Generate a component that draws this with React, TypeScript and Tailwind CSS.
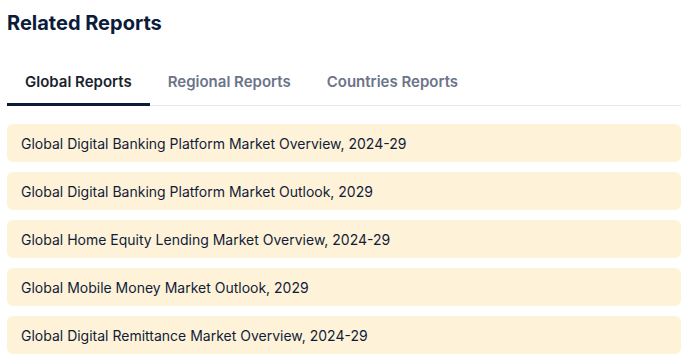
const tabs = ['Global Reports', 'Regional Reports', 'Countries Reports'];

const reports = [
  'Global Digital Banking Platform Market Overview, 2024-29',
  'Global Digital Banking Platform Market Outlook, 2029',
  'Global Home Equity Lending Market Overview, 2024-29',
  'Global Mobile Money Market Outlook, 2029',
  'Global Digital Remittance Market Overview, 2024-29',
];

const App = () => {
  return (
    <div className="bg-white w-[693px] h-[364px] pl-[7px] pr-[12px] pt-[10px] font-['Inter',sans-serif]">
      <h2 className="text-[20px] leading-[26px] font-bold text-[#0b1b3a]">Related Reports</h2>

      <div className="mt-[29px] flex border-b border-[#e5e7eb]">
        {tabs.map((tab, i) => (
          <div
            key={tab}
            className={
              i === 0
                ? 'px-[18px] pt-[7px] pb-[11px] text-[15px] leading-[20px] font-semibold text-[#1c1f2e] border-b-[3px] border-[#0b1b3a] -mb-[1px]'
                : 'px-[18px] pt-[7px] pb-[11px] text-[15px] leading-[20px] font-semibold text-[#6b7489]'
            }
          >
            {tab}
          </div>
        ))}
      </div>

      <div className="mt-[18px] flex flex-col gap-[10px]">
        {reports.map((r) => (
          <div key={r} className="h-[38px] flex items-center px-[14px] rounded-[6px] bg-[#fef3d8] text-[14px] text-[#111c3a]">
            {r}
          </div>
        ))}
      </div>
    </div>
  );
};

export default App;
